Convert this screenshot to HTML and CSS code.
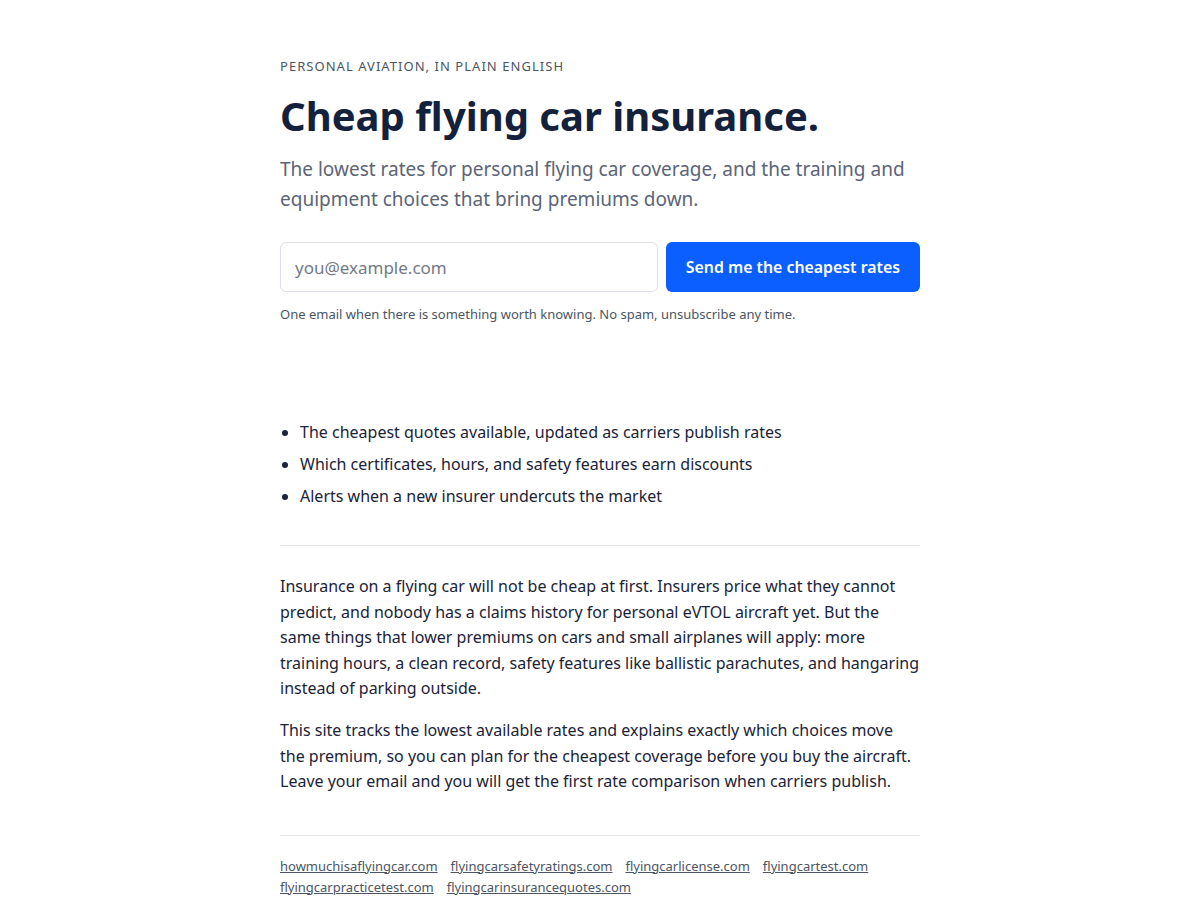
FILE: index.html
```html
<!DOCTYPE html>
<html lang="en">
<head>
<meta charset="utf-8">
<title>Cheap flying car insurance</title>
<link rel="stylesheet" href="styles.css">
</head>
<body>
<main class="page">
  <header class="hero">
    <p class="eyebrow">Personal aviation, in plain English</p>
    <h1 class="title">Cheap flying car insurance.</h1>
    <p class="lede">The lowest rates for personal flying car coverage, and the training and equipment choices that bring premiums down.</p>
    <form class="signup">
      <input class="email" type="email" placeholder="you@example.com">
      <button class="cta" type="button">Send me the cheapest rates</button>
    </form>
    <p class="fine">One email when there is something worth knowing. No spam, unsubscribe any time.</p>
  </header>
  <ul class="points">
    <li>The cheapest quotes available, updated as carriers publish rates</li>
    <li>Which certificates, hours, and safety features earn discounts</li>
    <li>Alerts when a new insurer undercuts the market</li>
  </ul>
  <section class="body">
    <p>Insurance on a flying car will not be cheap at first. Insurers price what they cannot predict, and nobody has a claims history for personal eVTOL aircraft yet. But the same things that lower premiums on cars and small airplanes will apply: more training hours, a clean record, safety features like ballistic parachutes, and hangaring instead of parking outside.</p>
    <p>This site tracks the lowest available rates and explains exactly which choices move the premium, so you can plan for the cheapest coverage before you buy the aircraft. Leave your email and you will get the first rate comparison when carriers publish.</p>
  </section>
  <footer class="links">
    <a href="#">howmuchisaflyingcar.com</a>
    <a href="#">flyingcarsafetyratings.com</a>
    <a href="#">flyingcarlicense.com</a>
    <a href="#">flyingcartest.com</a>
    <a href="#">flyingcarpracticetest.com</a>
    <a href="#">flyingcarinsurancequotes.com</a>
  </footer>
</main>
</body>
</html>
```
FILE: styles.css
```css
* { box-sizing: border-box; }
html, body { margin: 0; padding: 0; background: #ffffff; }
body {
  font-family: "Noto Sans", "Open Sans", sans-serif;
  color: #141f3a;
}
.page {
  width: 640px;
  margin: 0 auto;
  padding: 56px 0 0;
}
.eyebrow {
  margin: 0;
  font-size: 13px;
  line-height: 20px;
  letter-spacing: 0.08em;
  text-transform: uppercase;
  color: #4b5563;
}
.title {
  margin: 16px 0 0;
  font-size: 40px;
  line-height: 48px;
  font-weight: 700;
  color: #14213d;
}
.lede {
  margin: 14px 0 0;
  font-size: 19px;
  line-height: 30px;
  color: #5b6478;
}
.signup {
  display: flex;
  gap: 8px;
  margin: 28px 0 0;
}
.email {
  flex: 1;
  height: 50px;
  padding: 0 14px;
  font-family: inherit;
  font-size: 17px;
  color: #141f3a;
  border: 1px solid #dde1e7;
  border-radius: 6px;
  background: #fff;
}
.email::placeholder { color: #737a86; }
.cta {
  height: 50px;
  padding: 0 20px;
  font-family: inherit;
  font-size: 15.85px;
  font-weight: 600;
  color: #fff;
  background: #0b5fff;
  border: 0;
  border-radius: 6px;
}
.fine {
  margin: 12px 0 0;
  font-size: 13px;
  line-height: 20px;
  color: #4b5563;
}
.points {
  margin: 96px 0 0;
  padding: 0 0 0 20px;
  font-size: 16px;
  line-height: 24px;
  color: #1b2338;
}
.points li { margin: 0 0 8px; }
.body {
  margin: 37px 0 0;
  padding: 28px 0 0;
  border-top: 1px solid #e5e7eb;
}
.body p {
  margin: 0 0 16px;
  font-size: 16px;
  line-height: 25.6px;
  color: #1b2338;
}
.links {
  margin: 40px 0 0;
  padding: 20px 0 24px;
  border-top: 1px solid #e5e7eb;
  display: flex;
  flex-wrap: wrap;
  column-gap: 13px;
  font-size: 13px;
  line-height: 21px;
}
.links a { color: #4b5563; text-decoration: underline; }
```
